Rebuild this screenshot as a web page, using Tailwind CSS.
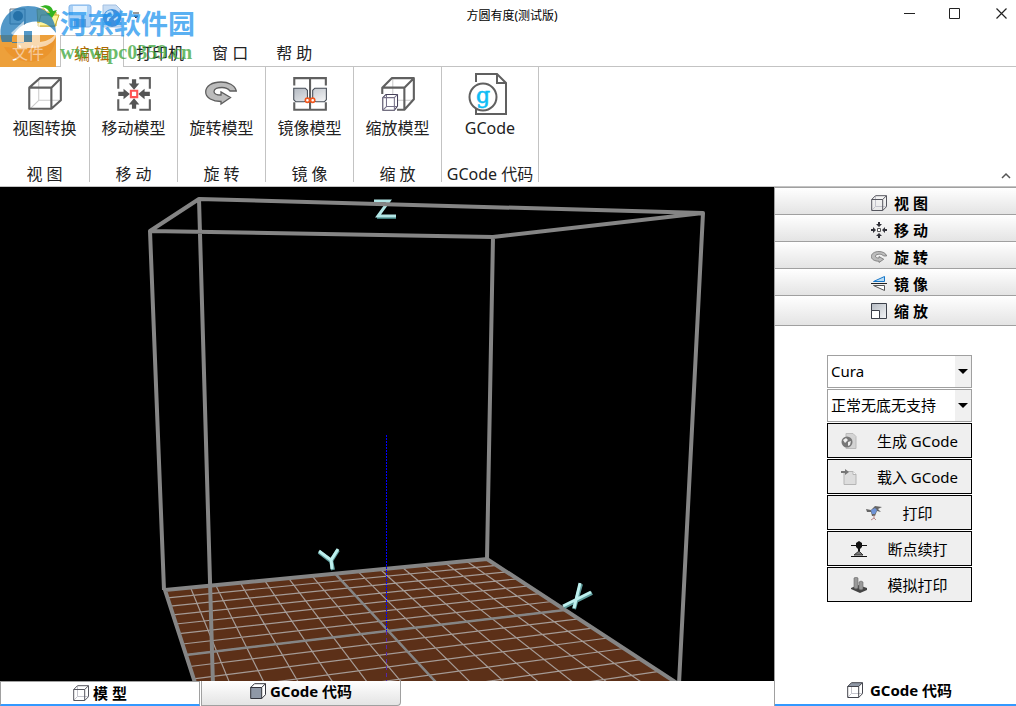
<!DOCTYPE html>
<html lang="zh-CN">
<head>
    <meta charset="UTF-8">
    <meta name="viewport" content="width=device-width, initial-scale=1.0">
    <title>方圆有度(测试版)</title>
    <script src="https://cdn.jsdelivr.net/npm/@tailwindcss/browser@4"></script>
</head>
<body class="flex min-h-screen flex-col bg-white font-['Noto_Sans','Noto_Sans_CJK_SC',sans-serif] text-base leading-5 text-[#222]">

    <!-- Shared icons -->
    <svg class="absolute h-0 w-0" aria-hidden="true">
        <defs>
            <linearGradient id="steel" x1="0" y1="0" x2="1" y2="1">
                <stop offset="0" stop-color="#b4bac2"/>
                <stop offset="1" stop-color="#f4f5f6"/>
            </linearGradient>
            <symbol id="cube" viewBox="0 0 16 16" fill="none" stroke="#55565e">
                <path d="M4.500 1v10.500H15M4.500 11.500L1 15" stroke="#c4c4cc"/>
                <path d="M.7 4.500h11v11H.7zM.7 4.500L4.500 .7h11v11l-3.800 3.800M11.700 4.500L15.500 .7"/>
            </symbol>
            <symbol id="swirl" viewBox="0 0 32 24">
                <path d="M31.300 10C30 4 23 1 16 1C7 1 .7 5 .7 11c0 6 7 9.500 15.300 9.500V23l9.500-6.500L16 11v3c-4 0-7-1-7-3.500C9 7.500 13 6.500 17 6.500c4 0 6 1 8 3.500z" fill="#bcbcbc" stroke="#5e5e5e" stroke-width="1.300"/>
            </symbol>
        </defs>
    </svg>

    <header class="relative border-b border-[#c3c3c3]">
        <div class="flex h-[35px] items-start justify-between">
            <div class="flex flex-1 items-center gap-2 pt-1 pl-2">
                <button aria-label="新建"><svg class="h-6 w-5" viewBox="0 0 20 24"><path d="M2 5h15v15H2z" fill="#e9eef2" stroke="#6b7580"/><circle cx="10" cy="12" r="5" fill="#49637f"/></svg></button>
                <button aria-label="打开"><svg class="h-6 w-6" viewBox="0 0 24 24"><path d="M1 5h7l2 3h10v14H2z" fill="#f7e96c" stroke="#c5a92b"/><path d="M5 11h18l-4 11H2z" fill="#fff59a" stroke="#c5a92b"/><path d="M4 3c8-4 12 0 13 4l4-1-5 8-6-5h4C12 5 9 3 4 3z" fill="#33b320"/></svg></button>
                <button aria-label="保存"><svg class="h-6 w-6" viewBox="0 0 24 24"><rect x="1" y="1" width="22" height="22" rx="2" fill="#a9d0f6" stroke="#7fb2e8"/><path d="M5 2h14v9H5z" fill="#e5f2fe"/><path d="M6 15h12v8H6z" fill="#5f9ddc"/></svg></button>
                <button aria-label="导出"><svg class="h-6 w-6" viewBox="0 0 24 24"><path d="M3 1h13l5 5v17H3z" fill="#c8ddf4" stroke="#a2c0e2"/><circle cx="12" cy="14" r="9" fill="#3f8fdd"/><path d="M6 10c4-5 8-2 6 1s-5 2-4 6M14 16l4-3" stroke="#b8defa" stroke-width="2" fill="none"/></svg></button>
                <button aria-label="更多"><svg class="h-2 w-2" viewBox="0 0 8 8"><path d="M1 1h6M2 4h4L4 6z" stroke="#333" fill="#333"/></svg></button>
            </div>
            <h1 class="pt-2 text-xs leading-4 text-black">方圆有度(测试版)</h1>
            <div class="flex flex-1 justify-end">
                <button aria-label="最小化" class="px-4 py-2"><svg class="h-3 w-3" viewBox="0 0 12 12"><path d="M0 5.500h11" stroke="#222"/></svg></button>
                <button aria-label="最大化" class="px-4 py-2"><svg class="h-3 w-3" viewBox="0 0 12 12"><path d="M1.500 .5h10v10h-10z" stroke="#222" fill="none"/></svg></button>
                <button aria-label="关闭" class="py-2 pr-2 pl-5"><svg class="h-3 w-3" viewBox="0 0 12 12"><path d="M.5 .5l10 10M10.500 .5l-10 10" stroke="#222" stroke-width="1.200"/></svg></button>
            </div>
        </div>
        <nav class="-mb-px flex h-8 items-stretch">
            <a href="#" class="flex w-14 items-center justify-center bg-[#eda03b] pt-1 text-white">文件</a>
            <a href="#" class="ml-1 flex w-16 items-center justify-center border-x border-t border-[#c3c3c3] bg-white pt-1 text-[#b06a00]">编 辑</a>
            <a href="#" class="ml-3 flex items-center pt-1">打印机</a>
            <a href="#" class="ml-7 flex items-center pt-1">窗 口</a>
            <a href="#" class="ml-7 flex items-center pt-1">帮 助</a>
        </nav>

        <!-- Site badge laid over the quick access bar -->
        <div class="pointer-events-none absolute top-1 left-0 flex">
            <svg class="h-16 w-15" viewBox="0 0 60 64">
                <path d="M28 2C47 2 56 15 56 29C46 14 24 12 12 33v6h12V27h8v11H2C-4 20 8 2 28 2z" fill="#1976b5" fill-opacity=".75"/>
                <path d="M55 32c2 18-16 29-32 25C13 55 7 49 4 43c19 2 38 1 51-11z" fill="#e9881d" fill-opacity=".45"/>
                <path d="M11 29L24 17v21h8V19h8v19c8-1 13-4 16-9c1 10-12 15-23 15H17V28l-4 3z" fill="#fff" fill-opacity=".6"/>
            </svg>
            <div class="pt-1 whitespace-nowrap">
                <p class="text-[27px] leading-8 font-bold text-[#2496ee]/75">河东软件园</p>
                <p class="font-['Liberation_Serif',serif] text-xl leading-6 font-bold text-[#3aa53a]/75">www.pc0359.cn</p>
            </div>
        </div>
    </header>

    <!-- Ribbon -->
    <section class="flex h-30 border-b border-[#c3c3c3]">
        <div class="mb-1 flex w-[90px] flex-col items-center justify-between border-r border-[#c3c3c3] pt-2">
            <button class="flex flex-col items-center gap-[3px]">
                <svg class="h-10 w-10" viewBox="0 2 38 38" fill="none"><path d="M14 5v21h20M14 26l-9 9" stroke="#ccc"/><path d="M5 14h21v20H5zM5 14l10-9h20v21l-9 8M26 14l9-9" stroke="#606060" stroke-width="2" stroke-linejoin="round"/></svg>
                <span>视图转换</span>
            </button>
            <span class="leading-4">视 图</span>
        </div>
        <div class="mb-1 flex w-[88px] flex-col items-center justify-between border-r border-[#c3c3c3] pt-2">
            <button class="flex flex-col items-center gap-[3px]">
                <svg class="h-10 w-10" viewBox="0 2 38 38" fill="none"><path d="M5 15V5h10M25 5h10v10M35 25v10H25M15 35H5V25" stroke="#606060" stroke-width="2"/><path d="M18 6h4v4h3l-5 6-5-6h3zM18 34h4v-4h3l-5-6-5 6h3zM5 18v4h5v3l6-5-6-5v3zM35 18v4h-5v3l-6-5 6-5v3z" fill="#555"/><path d="M17 17h6v6h-6z" stroke="#f55" stroke-width="2"/></svg>
                <span>移动模型</span>
            </button>
            <span class="leading-4">移 动</span>
        </div>
        <div class="mb-1 flex w-[88px] flex-col items-center justify-between border-r border-[#c3c3c3] pt-2">
            <button class="flex flex-col items-center gap-[3px]">
                <svg class="h-10 w-8 pb-1"><use href="#swirl"/></svg>
                <span>旋转模型</span>
            </button>
            <span class="leading-4">旋 转</span>
        </div>
        <div class="mb-1 flex w-[88px] flex-col items-center justify-between border-r border-[#c3c3c3] pt-2">
            <button class="flex flex-col items-center gap-[3px]">
                <svg class="h-10 w-10" viewBox="0 2 38 38" fill="none"><path d="M5 12V5h30v7M5 28v7h30v-7M20 4v31" stroke="#606060" stroke-width="2"/><path d="M4.500 14.500h11l2 2v9l-3 2h-8l-2-2zM35.500 14.500h-11l-2 2v9l3 2h8l2-2z" fill="url(#steel)" stroke="#444b55"/><circle cx="17.500" cy="26" r="2" stroke="#f0561d" stroke-width="1.500" fill="#fff"/><circle cx="22.500" cy="26" r="2" stroke="#f0561d" stroke-width="1.500" fill="#fff"/></svg>
                <span>镜像模型</span>
            </button>
            <span class="leading-4">镜 像</span>
        </div>
        <div class="mb-1 flex w-[88px] flex-col items-center justify-between border-r border-[#c3c3c3] pt-2">
            <button class="flex flex-col items-center gap-[3px]">
                <svg class="h-10 w-10" viewBox="0 2 38 38" fill="none"><path d="M15 5v21h20" stroke="#ccc"/><path d="M5 20v-6l9-9h21v20l-9 10h-7M5 14h21v21M26 14l9-9" stroke="#606060" stroke-width="2" stroke-linejoin="round"/><path d="M5.500 23.500l3-3h11v11l-3 4h-11z" fill="#fff" stroke="#454058"/><path d="M5.500 23.500h11v12M16.500 23.500l3-3M9 21v11h10M9 32l-3 3" stroke="#77728a"/></svg>
                <span>缩放模型</span>
            </button>
            <span class="leading-4">缩 放</span>
        </div>
        <div class="mb-1 flex w-[97px] flex-col items-center justify-between border-r border-[#c3c3c3] pt-[3px]">
            <button class="flex flex-col items-center">
                <svg class="h-12 w-12" viewBox="5 0 48 48" fill="none"><path d="M15 12V4h21l9 9v31H15v-6M36 4v9h9" stroke="#606060" stroke-width="2"/><circle cx="22" cy="27" r="13.500" fill="#fff" stroke="#606060" stroke-width="2"/><text x="22" y="33" text-anchor="middle" font-family="DejaVu Serif, serif" font-size="22" fill="#0cbdf5" stroke="#0cbdf5" stroke-width=".6">g</text></svg>
                <span>GCode</span>
            </button>
            <span class="leading-4 whitespace-nowrap">GCode 代码</span>
        </div>
        <button aria-label="折叠功能区" class="mt-auto ml-auto px-1 pb-1"><svg class="h-3 w-3" viewBox="0 0 12 12"><path d="M2 8l4-4 4 4" stroke="#555" stroke-width="1.500" fill="none"/></svg></button>
    </section>

    <main class="flex flex-1">
        <div class="flex min-w-0 flex-1 flex-col">
            <!-- 3D build volume -->
            <div class="relative min-h-96 flex-1 overflow-hidden bg-black">
                <svg class="absolute inset-0 h-full w-full" viewBox="0 187 774 494" preserveAspectRatio="xMidYMid slice" fill="none">
                    <path id="floor" fill="#5c3018"/>
                    <path id="grid" stroke="#a59b96" stroke-width="1.200"/>
                    <path id="axes" stroke="#858585" stroke-width="2.500"/>
                    <path id="rim" stroke="#858585" stroke-width="4"/>
                    <path d="M386.500 435V631" stroke="#0000ff" stroke-dasharray="2 1"/>
                    <path d="M386.500 631V690" stroke="#5528a8" stroke-dasharray="4 3"/>
                    <g stroke-width="4">
                        <path d="M319 552l12 9 7-11M331 560l2 10M564 607l28-14M581 584l-7 25" stroke="#5f9c9c"/>
                        <path d="M319 551l12 9 7-11M331 559l1 10M563 606l28-14M580 583l-6 25" stroke="#bdf0ee" stroke-width="3"/>
                    </g>
                    <path d="M377 217h19" stroke="#3b7777" stroke-width="4"/>
                    <path d="M374 201h15l-11 15h18" stroke="#b2e6e6" stroke-width="3"/>
                    <path d="M150 231L199 199L703 213L493 237zM150 231L164 590M199 199L215 755M493 237L487 559M703 213L679 684" stroke="#858585" stroke-width="4" stroke-linejoin="round"/>
                </svg>
            </div>
            <div class="flex h-[25px] text-[15px] font-bold text-black">
                <button class="flex w-[200px] items-center justify-center gap-1 border-x border-t border-b-2 border-[#a0a0a0] border-b-[#3399ff] bg-white">
                    <svg class="h-4 w-4"><use href="#cube"/></svg>模 型
                </button>
                <button class="ml-px flex w-[200px] items-center justify-center gap-1 rounded-br border border-t-0 border-[#a0a0a0] bg-linear-to-b from-white to-[#e4e4e4] pb-1">
                    <svg class="h-4 w-4" viewBox="0 0 16 16" fill="none" stroke="#33343c"><path d="M.7 4.500L4.500 .7h11v11l-3.800 3.800z" fill="#fff"/><path d="M.7 4.500h11v11H.7z" fill="#8f98a6"/><path d="M11.700 4.500L15.500 .7"/></svg>GCode 代码
                </button>
            </div>
        </div>

        <aside class="flex w-[242px] flex-col border-l border-[#a0a0a0] text-[15px] text-black">
            <div class="flex flex-col border-t border-[#a0a0a0] font-bold">
                <button class="flex h-[27px] items-center justify-center gap-[7px] border-b border-[#a0a0a0] bg-linear-to-b from-white to-[#e4e4e4] pt-1 pl-2">
                    <svg class="h-4 w-4"><use href="#cube"/></svg>视 图
                </button>
                <button class="flex h-[27px] items-center justify-center gap-[7px] border-b border-[#a0a0a0] bg-linear-to-b from-white to-[#e4e4e4] pt-1 pl-2">
                    <svg class="h-4 w-4" viewBox="0 0 16 16" fill="#303038"><path d="M7 0h2v2h2L8 5 5 2h2zM7 16h2v-2h2l-3-3-3 3h2zM0 7v2h2v2l3-3-3-3v2zM16 7v2h-2v2l-3-3 3-3v2z"/><path d="M6.500 6.500h3v3h-3z" fill="#fff" stroke="#555"/></svg>移 动
                </button>
                <button class="flex h-[27px] items-center justify-center gap-[7px] border-b border-[#a0a0a0] bg-linear-to-b from-white to-[#e4e4e4] pt-1 pl-2">
                    <svg class="h-4 w-4"><use href="#swirl"/></svg>旋 转
                </button>
                <button class="flex h-[27px] items-center justify-center gap-[7px] border-b border-[#a0a0a0] bg-linear-to-b from-white to-[#e4e4e4] pt-1 pl-2">
                    <svg class="h-4 w-4" viewBox="0 0 16 16" fill="none"><path d="M2.500 5.500l11-5v5z" fill="#b9dcf5" stroke="#1677c8"/><path d="M0 7.500h16" stroke="#222"/><path d="M2.500 9.500h11v5z" fill="#fff" stroke="#555"/></svg>镜 像
                </button>
                <button class="flex h-[30px] items-center justify-center gap-[7px] border-b border-[#a0a0a0] bg-linear-to-b from-white to-[#e4e4e4] pl-2">
                    <svg class="h-4 w-4" viewBox="0 0 16 16"><path d="M.5 .5h15v15H.5z" fill="url(#steel)" stroke="#3c404a"/><path d="M.5 7.500h8v8h-8z" fill="#fff" stroke="#3c404a"/></svg>缩 放
                </button>
            </div>

            <form class="mt-[29px] flex flex-col gap-px pr-[44px] pl-[52px]">
                <div class="relative">
                    <select aria-label="切片引擎" class="h-[33px] w-full appearance-none border border-[#a0a0a0] bg-white px-[3px] pb-[2px]"><option>Cura</option></select>
                    <svg class="pointer-events-none absolute inset-y-0 right-px my-px h-[31px] w-4 bg-[#f0f0f0]" viewBox="0 0 16 31"><path d="M3 13h10l-5 5z"/></svg>
                </div>
                <div class="relative">
                    <select aria-label="打印配置" class="h-[33px] w-full appearance-none border border-[#a0a0a0] bg-white px-[3px] pb-[2px]"><option>正常无底无支持</option></select>
                    <svg class="pointer-events-none absolute inset-y-0 right-px my-px h-[31px] w-4 bg-[#f0f0f0]" viewBox="0 0 16 31"><path d="M3 13h10l-5 5z"/></svg>
                </div>
                <button type="button" class="flex h-[35px] items-center justify-center gap-5 border border-black bg-[#efefef]">
                    <svg class="h-4 w-4" viewBox="0 0 16 16"><path d="M5 .5h7l3 3v12H5z" fill="#d4d4d4" stroke="#bbb"/><circle cx="6" cy="9" r="5.500" fill="#777"/><path d="M2 7l3-2 2 2-3 3zM7 9l3-1-1 4-2 1z" fill="#eee"/></svg>生成 GCode
                </button>
                <button type="button" class="flex h-[35px] items-center justify-center gap-5 border border-black bg-[#efefef]">
                    <svg class="h-4 w-4" viewBox="0 0 16 16"><path d="M3 2.500h9l3 3v10H3z" fill="#ddd" stroke="#b5b5b5"/><path d="M12 2.500v3h3" fill="#fff" stroke="#b5b5b5"/><path d="M0 2h4V0l4 3-4 3V4H0z" fill="#777"/></svg>载入 GCode
                </button>
                <button type="button" class="flex h-[35px] items-center justify-center gap-5 border border-black bg-[#efefef]">
                    <svg class="h-4 w-4" viewBox="0 0 16 16"><path d="M0 4l5 1 4-4 7 1-4 2 3 3-4-1-2 5H6L5 7 1 7z" fill="#666"/><path d="M5 5l4-2 2 2-2 4H6z" fill="#7194d8"/><path d="M8 10v3l-3 2M8 13l2 2" stroke="#b88" fill="none"/></svg>打印
                </button>
                <button type="button" class="flex h-[35px] items-center justify-center gap-5 border border-black bg-[#efefef]">
                    <svg class="h-4 w-4" viewBox="0 0 16 16"><path d="M0 4.500h16M0 15.500h16" stroke="#111"/><path d="M5 2l3-2 3 2v4L9 8v2H7V8L5 6z" fill="#111"/><path d="M3 14l5-4 4 4z" fill="#777" stroke="#333"/></svg>断点续打
                </button>
                <button type="button" class="flex h-[35px] items-center justify-center gap-5 border border-black bg-[#efefef]">
                    <svg class="h-4 w-4" viewBox="0 0 16 16"><path d="M0 11l7-3 9 3v2l-7 3-9-4z" fill="#444"/><path d="M3 1l2-1 2 1v10l-2 1-2-1zM8 5l2-1 2 1v7l-2 1-2-1z" fill="#999" stroke="#666" stroke-width=".6"/></svg>模拟打印
                </button>
            </form>

            <button class="mt-auto flex h-[30px] items-center justify-center gap-[7px] border-b-2 border-[#3399ff] pl-2 font-bold">
                <svg class="h-4 w-4" viewBox="0 0 16 16" fill="none" stroke="#44454d"><path d="M4.500 5v6.500H15M4.500 11.500L1 15" stroke="#c4c4cc"/><path d="M.7 4.500L4.500 .7h11l-3.800 3.800z" fill="#8f98a6"/><path d="M.7 4.500h11v11H.7zM15.500 .7v11l-3.800 3.800"/></svg>GCode 代码
            </button>
        </aside>
    </main>

    <script>
        // Projects a point of the print bed (0..1 on both sides) onto the view
        function project(u, v) {
            const w = 1 + 0.12 * u - 0.35 * v;
            return ((380.4 * u - 23.1 * v + 165) / w).toFixed(1) + ' ' + ((36.1 * u - 99.4 * v + 590) / w).toFixed(1);
        }
        const line = (a, b, c, d) => 'M' + project(a, b) + 'L' + project(c, d);
        const cells = 14;
        let grid = '';
        for (let i = 1; i < cells; i++) {
            const t = i / cells;
            grid += line(t, 0, t, 1) + line(0, t, 1, t);
        }
        const rim = line(0, 0, 1, 0) + 'L' + project(1, 1) + 'L' + project(0, 1) + 'Z';
        document.getElementById('floor').setAttribute('d', rim);
        document.getElementById('rim').setAttribute('d', rim);
        document.getElementById('grid').setAttribute('d', grid);
        document.getElementById('axes').setAttribute('d', line(0.5, 0, 0.5, 1) + line(0, 0.5, 1, 0.5));
    </script>
</body>
</html>
